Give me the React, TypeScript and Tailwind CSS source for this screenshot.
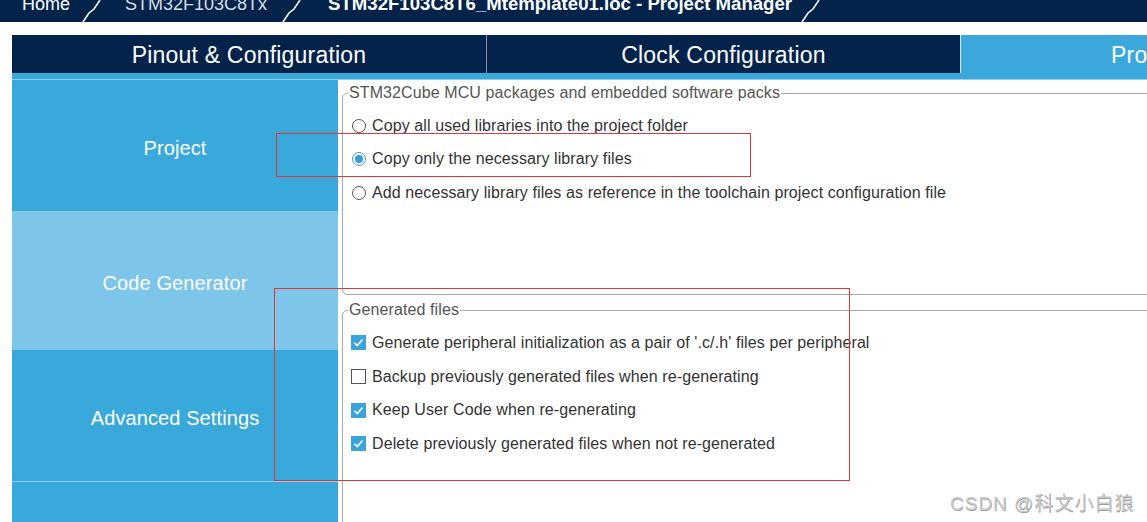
import React from 'react';

const radios = [
  { label: 'Copy all used libraries into the project folder', checked: false },
  { label: 'Copy only the necessary library files', checked: true },
  { label: 'Add necessary library files as reference in the toolchain project configuration file', checked: false },
];

const checks = [
  { label: "Generate peripheral initialization as a pair of '.c/.h' files per peripheral", checked: true },
  { label: 'Backup previously generated files when re-generating', checked: false },
  { label: 'Keep User Code when re-generating', checked: true },
  { label: 'Delete previously generated files when not re-generated', checked: true },
];

const Radio = ({ checked }: { checked: boolean }) =>
  checked ? (
    <span className="w-[14px] h-[14px] rounded-full border border-[#3a9ad9] bg-white flex items-center justify-center shrink-0">
      <span className="w-[8px] h-[8px] rounded-full bg-[#3a9ad9]" />
    </span>
  ) : (
    <span className="w-[14px] h-[14px] rounded-full border border-[#555] bg-white shrink-0" />
  );

const Check = ({ checked }: { checked: boolean }) =>
  checked ? (
    <span className="w-[15px] h-[15px] bg-[#3ba3dc] flex items-center justify-center shrink-0">
      <svg width="11" height="11" viewBox="0 0 11 11">
        <path d="M1.5 5.8 L4.3 8.5 L9.5 2.5" fill="none" stroke="white" strokeWidth="1.6" />
      </svg>
    </span>
  ) : (
    <span className="w-[15px] h-[15px] border border-[#555] bg-white shrink-0" />
  );

const Slash = () => (
  <svg width="24" height="22" viewBox="0 0 24 22" className="shrink-0">
    <path d="M2 22 L8 13 L13 9 L19 0" fill="none" stroke="white" strokeWidth="1.6" />
  </svg>
);

export default function App() {
  return (
    <div className="relative w-[1147px] h-[522px] overflow-hidden bg-white font-['Liberation_Sans','Noto_Sans_CJK_SC',sans-serif]">
      {/* breadcrumb bar */}
      <div className="h-[22px] bg-[#03234b] flex items-start overflow-hidden text-white text-[18px] leading-[18px] whitespace-nowrap">
        <span className="ml-[22px] mt-[-5px] shrink-0">Home</span>
        <span className="ml-[11px] shrink-0"><Slash /></span>
        <span className="ml-[20px] mt-[-5px] shrink-0 text-[#d8dde6]">STM32F103C8Tx</span>
        <span className="ml-[14px] shrink-0"><Slash /></span>
        <span className="ml-[23px] mt-[-5px] shrink-0 font-bold text-[18.6px]">STM32F103C8T6_Mtemplate01.ioc - Project Manager</span>
        <span className="ml-[8px] shrink-0"><Slash /></span>
      </div>
      <div className="h-[13px]" />

      {/* main tabs */}
      <div className="ml-[12px] h-[38px] flex text-white text-[23px] tracking-[0.2px] whitespace-nowrap">
        <div className="w-[474px] shrink-0 pt-[2px] bg-[#03234b] flex items-center justify-center">Pinout &amp; Configuration</div>
        <div className="w-px shrink-0 bg-[#8a96aa]" />
        <div className="w-[473px] shrink-0 pt-[2px] bg-[#03234b] flex items-center justify-center">Clock Configuration</div>
        <div className="w-px shrink-0 bg-[#d7eefa]" />
        <div className="w-[300px] shrink-0 pt-[2px] bg-[#3aa8db] flex items-center pl-[150px]">Project Manager</div>
      </div>
      <div className="ml-[12px] h-[7px] bg-[#3aa8db] border-b border-[#8fd0f0]" />

      <div className="flex h-[442px]">
        {/* side menu */}
        <div className="ml-[12px] w-[326px] flex flex-col text-white text-[20px] tracking-[0.1px] shrink-0">
          <div className="h-[131px] pt-[4px] bg-[#39a8db] flex items-center justify-center">Project</div>
          <div className="h-[2px] bg-[#7ec6ea]" />
          <div className="h-[137px] pt-[3px] bg-[#7dc5e9] flex items-center justify-center">Code Generator</div>
          <div className="h-[131px] pt-[4px] bg-[#39a8db] flex items-center justify-center">Advanced Settings</div>
          <div className="h-px bg-[#8ccdee]" />
          <div className="flex-1 bg-[#39a8db]" />
        </div>

        {/* content */}
        <div className="flex-1 overflow-hidden pl-[4px] text-[16px] tracking-[0.1px] text-[#333]">
          <fieldset className="mt-[4px] w-[830px] h-[211px] border border-[#a7a9ad] rounded-[5px]">
            <legend className="ml-[5px] px-[1px] leading-[18px] text-[#555]">STM32Cube MCU packages and embedded software packs</legend>
            <div className="pt-[7px] pl-[9px] flex flex-col">
              {radios.map((r) => (
                <div key={r.label} className="h-[33.5px] flex items-center gap-[6px] whitespace-nowrap">
                  <Radio checked={r.checked} />
                  <span>{r.label}</span>
                </div>
              ))}
            </div>
          </fieldset>
          <fieldset className="mt-[6px] w-[830px] h-[260px] border border-[#a7a9ad] rounded-[5px]">
            <legend className="ml-[5px] px-[1px] leading-[18px] text-[#555]">Generated files</legend>
            <div className="pt-[7px] pl-[8px] flex flex-col">
              {checks.map((c) => (
                <div key={c.label} className="h-[33.7px] flex items-center gap-[6px] whitespace-nowrap">
                  <Check checked={c.checked} />
                  <span>{c.label}</span>
                </div>
              ))}
            </div>
          </fieldset>
        </div>
      </div>

      {/* annotation boxes */}
      <div className="absolute left-[276px] top-[133px] w-[475px] h-[44px] border border-[#e0353d]" />
      <div className="absolute left-[274px] top-[288px] w-[576px] h-[193px] border border-[#e0353d]" />

      {/* watermark */}
      <div className="absolute left-[950px] top-[490px] text-[19px] tracking-[1px] text-[#c8c8c8] [text-shadow:0.5px_0.5px_0.5px_#a0a0a0] whitespace-nowrap">
        CSDN @科文小白狼
      </div>
    </div>
  );
}
